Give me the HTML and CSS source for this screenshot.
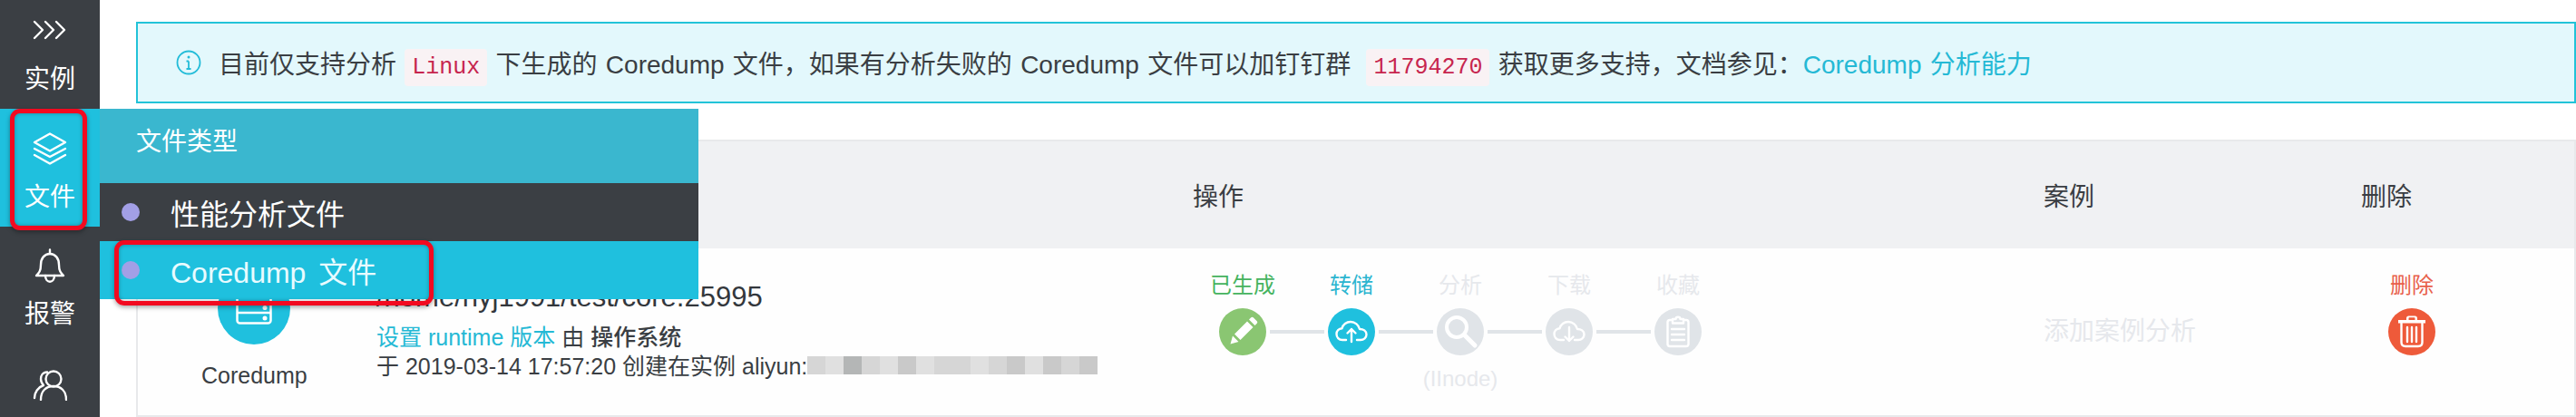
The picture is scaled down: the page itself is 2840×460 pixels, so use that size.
FILE: index.html
```html
<!DOCTYPE html>
<html lang="zh">
<head>
<meta charset="utf-8">
<title>Coredump 文件</title>
<link rel="stylesheet" href="styles.css">
</head>
<body>
<div class="app">
  <nav class="side">
    <a class="side-item first">
      <svg class="side-icon chev" viewBox="0 0 38 22"><path d="M2 2l9 9-9 9M14 2l9 9-9 9M26 2l9 9-9 9"/></svg>
      <span>实例</span>
    </a>
    <a class="side-item active">
      <svg class="side-icon stack" viewBox="0 0 38 36"><path d="M19 1.5L36 11 19 20.500 2 11z"/><path d="M2 18l17 9 17-9"/><path d="M2 25l17 9.500 17-9.500"/></svg>
      <span>文件</span>
    </a>
    <a class="side-item bell-item">
      <svg class="side-icon bell" viewBox="0 0 34 40"><path d="M2 31c3-3 5-5 5-12 0-7 4-12 10-12s10 5 10 12c0 7 2 9 5 12z"/><path d="M17 7V2.500M12 31c0 9 10 9 10 0"/></svg>
      <span>报警</span>
    </a>
    <a class="side-item users-item">
      <svg class="side-icon users" viewBox="0 0 38 34"><circle cx="23" cy="10" r="8.500"/><path d="M9 33c0-10 6-15 14-15s14 5 14 15"/><path d="M16 2.500c-5 0-7 4-7 7.500 0 3 1 5 3 7-6 2-10 8-10 14"/></svg>
    </a>
  </nav>

  <div class="flyout">
    <div class="fly-head">文件类型</div>
    <div class="fly-item"><i class="dot"></i><span>性能分析文件</span></div>
    <div class="fly-item current"><i class="dot"></i><span>Coredump 文件</span></div>
  </div>
  <div class="mark mark-side"></div>
  <div class="mark mark-item"></div>

  <main class="main">
    <div class="alert">
      <svg class="info" viewBox="0 0 28 28"><circle cx="14" cy="14" r="12.500"/><path d="M14 12.500v8.500M11.500 12.500H14M11.500 21h5"/><circle class="info-dot" cx="14" cy="8" r="1.500"/></svg>
      <span class="alert-text">目前仅支持分析 <code>Linux</code> 下生成的 Coredump 文件，如果有分析失败的 Coredump 文件可以加钉钉群 <code class="group-id">11794270</code> 获取更多支持，文档参见：<a class="link">Coredump 分析能力</a></span>
    </div>

    <section class="table">
      <div class="thead">
        <span></span>
        <span>操作</span>
        <span>案例</span>
        <span>删除</span>
      </div>
      <div class="trow">
        <div class="file">
          <div class="file-type">
            <div class="file-circle">
              <svg class="server" viewBox="0 0 40 36"><rect x="1.500" y="1.500" width="37" height="33" rx="3"/><path d="M1.500 12h37M1.500 23h37"/><circle class="fill" cx="32" cy="17.500" r="2.500"/><circle class="fill" cx="32" cy="29" r="2.500"/></svg>
            </div>
            <span class="file-label">Coredump</span>
          </div>
          <div class="file-info">
            <div class="file-path">/home/nyj1991/test/core.25995</div>
            <div class="file-meta"><a class="link">设置 runtime 版本</a> 由 <b>操作系统</b></div>
            <div class="file-meta created">于 2019-03-14 17:57:20 创建在实例 aliyun:<span class="mosaic"><i class="m1"></i><i class="m2"></i><i class="m3"></i><i class="m1"></i><i class="m2"></i><i class="m4"></i><i class="m2"></i><i class="m1"></i><i class="m1"></i><i class="m2"></i><i class="m1"></i><i class="m4"></i><i class="m2"></i><i class="m4"></i><i class="m1"></i><i class="m4"></i></span></div>
          </div>
        </div>

        <div class="steps">
          <div class="step-labels">
            <span class="green">已生成</span>
            <span class="blue">转储</span>
            <span>分析</span>
            <span>下载</span>
            <span>收藏</span>
          </div>
          <div class="step-icons">
            <div class="circle bg-green"><svg viewBox="0 0 52 52"><path class="solid" d="M12.500 39.500l2.500-9 6.500 6.500zM17 28.500L31 14.500l6.500 6.500L23.500 35zM33 12.500l2-2c1-1 2-1 3 0l3.500 3.500c1 1 1 2 0 3l-2 2z"/></svg></div>
            <i class="line"></i>
            <div class="circle bg-blue"><svg viewBox="0 0 52 52"><path class="stroke" d="M20 35h-4c-4 0-6.500-3-6.500-6.500 0-3.500 2.500-6 6-6.200C16.500 18 20.500 15 25 15c5 0 9 3.500 10 8 4 0 7.500 2 7.500 6 0 3.500-3 6-6.500 6h-4"/><path class="stroke" d="M26 37V23M21.500 27.500L26 23l4.500 4.500"/></svg></div>
            <i class="line"></i>
            <div class="circle"><svg viewBox="0 0 52 52"><circle class="stroke thick" cx="22" cy="21" r="11"/><path class="stroke wide" d="M31 30l11 11"/></svg></div>
            <i class="line"></i>
            <div class="circle"><svg viewBox="0 0 52 52"><path class="stroke" d="M20 35h-4c-4 0-6.500-3-6.500-6.500 0-3.500 2.500-6 6-6.200C16.500 18 20.500 15 25 15c5 0 9 3.500 10 8 4 0 7.500 2 7.500 6 0 3.500-3 6-6.500 6h-4"/><path class="stroke" d="M26 21v15M21.500 31.500L26 36l4.500-4.500"/></svg></div>
            <i class="line"></i>
            <div class="circle"><svg viewBox="0 0 52 52"><path class="stroke" d="M20 13h-3c-1.500 0-2.500 1-2.500 2.500v24c0 1.500 1 2.500 2.500 2.500h18c1.500 0 2.500-1 2.500-2.500v-24c0-1.500-1-2.500-2.500-2.500h-3"/><path class="stroke" d="M20 16.500h12V12h-3.500c0-3-5-3-5 0H20z"/><path class="stroke" d="M19 23h14M19 29h14M19 35h14"/></svg></div>
          </div>
          <div class="step-notes"><span></span><span></span><span>(IInode)</span><span></span><span></span></div>
        </div>

        <div class="case">添加案例分析</div>

        <div class="remove">
          <span class="remove-label">删除</span>
          <div class="circle bg-red"><svg viewBox="0 0 52 52"><path class="solid" d="M11 13h30v3.500H11zM20 13v-2c0-1.500 1-2.500 2.500-2.500h7c1.500 0 2.500 1 2.500 2.500v2h-2.500v-2c0-.5-.2-.7-.7-.7h-5.600c-.5 0-.7.2-.7.7v2z"/><path class="stroke" d="M14.500 16.500v21c0 3 1.500 4.500 4.500 4.500h14c3 0 4.500-1.500 4.500-4.500v-21"/><path class="stroke" d="M21 21v16M26 21v16M31 21v16"/></svg></div>
        </div>
      </div>
    </section>
  </main>
</div>
</body>
</html>
```

FILE: styles.css
```css
* { box-sizing: border-box; }
html, body { margin: 0; height: 460px; overflow: hidden; background: #fff; }
body {
  font-family: "Liberation Sans", "Noto Sans CJK SC", sans-serif;
  color: #3a3e43;
  font-size: 24px;
}
.app { display: flex; height: 460px; position: relative; }

/* sidebar */
.side {
  width: 110px;
  flex: none;
  background: #3b3f44;
  color: #fff;
  display: flex;
  flex-direction: column;
  font-size: 28px;
  overflow: hidden;
}
.side-item { display: flex; flex-direction: column; align-items: center; }
.side-item span { line-height: 32px; }
.side-item.first { height: 120px; padding-top: 22px; gap: 28px; }
.side-item.active { height: 130px; padding-top: 26px; gap: 20px; background: #1fc0de; }
.bell-item { height: 138px; padding-top: 23px; gap: 18px; }
.users-item { padding-top: 20px; }
.side-icon { fill: none; stroke: #fff; stroke-width: 2.4; stroke-linecap: round; stroke-linejoin: round; display: block; }
.chev { width: 38px; height: 22px; }
.stack { width: 38px; height: 36px; }
.bell { width: 34px; height: 40px; }
.users { width: 38px; height: 34px; }

/* flyout menu */
.flyout {
  position: absolute;
  left: 110px;
  top: 120px;
  width: 660px;
  z-index: 3;
  color: #fff;
}
.fly-head {
  height: 82px;
  background: #3ab7cf;
  padding: 18px 0 0 40px;
  font-size: 28px;
  line-height: 38px;
}
.fly-item {
  height: 64px;
  background: #3b3f44;
  display: flex;
  align-items: center;
  padding-left: 24px;
  font-size: 32px;
  gap: 34px;
  word-spacing: 5px;
}
.fly-item.current { background: #1fc0de; color: #e8fbff; }
.dot { width: 20px; height: 20px; border-radius: 50%; background: #a29fe6; flex: none; }

/* red annotations */
.mark {
  position: absolute;
  z-index: 4;
  border: 5px solid #f20a20;
  border-radius: 11px;
  box-shadow: 0 2px 5px rgba(0, 0, 0, .35), inset 0 0 4px rgba(0, 0, 0, .3);
}
.mark-side { left: 11px; top: 120px; width: 85px; height: 134px; }
.mark-item { left: 126px; top: 265px; width: 352px; height: 72px; }

/* main */
.main { flex: 1; min-width: 0; padding: 24px 0 0 40px; display: flex; flex-direction: column; gap: 40px; }
.alert {
  height: 90px;
  background: #e3f8fc;
  border: 2px solid #22c3d8;
  display: flex;
  align-items: center;
  padding-left: 42px;
  gap: 19px;
  font-size: 28px;
}
.info { width: 28px; height: 28px; flex: none; fill: none; stroke: #22bcd8; stroke-width: 1.8; }
.info-dot { fill: #22bcd8; stroke: none; }
.alert-text { white-space: nowrap; word-spacing: 1.500px; }
code {
  font-family: "Liberation Mono", monospace;
  font-size: 25px;
  color: #c7254e;
  background: #f9f2f4;
  padding: 6px 8px;
  border-radius: 4px;
  word-spacing: 0;
}
.group-id { margin-left: 8px; }
.link { color: #25b9d5; }

/* table */
.table { border: 2px solid #e8e9eb; height: 306px; display: flex; flex-direction: column; }
.thead {
  height: 118px;
  background: #f0f1f3;
  display: grid;
  grid-template-columns: 1163px 938px 350px 1fr;
  align-items: center;
  font-size: 28px;
}
.trow {
  flex: 1;
  display: grid;
  grid-template-columns: 1158px 943px 380px 1fr;
  background: #fefefe;
}
.file { display: flex; }
.file-type { width: 263px; padding: 26px 0 0 70px; display: flex; flex-direction: column; align-items: flex-start; }
.file-circle { width: 80px; height: 80px; border-radius: 50%; background: #1fc0de; margin-left: 18px; display: flex; align-items: center; justify-content: center; }
.server { width: 40px; height: 36px; fill: none; stroke: #fff; stroke-width: 2.5; }
.server .fill { fill: #fff; stroke: none; }
.file-label { margin-top: 20px; line-height: 28px; font-size: 25px; }
.file-info { padding-top: 36px; white-space: nowrap; font-size: 25px; }
.file-path { font-size: 31px; line-height: 36px; color: #33373c; }
.file-meta { line-height: 32px; }
.file-meta b { font-weight: 500; }
.file-info .file-path + .file-meta { margin-top: 10px; }
.created { display: flex; }
.mosaic { display: flex; height: 20px; margin-top: 5px; }
.mosaic i { width: 20px; height: 20px; }
.m1 { background: #d6d6d6; }
.m2 { background: #e0e0e0; }
.m3 { background: #b4b6b6; }
.m4 { background: #c9c9c9; }

/* steps */
.steps { padding-top: 27px; }
.step-labels, .step-notes { display: flex; color: #e6e8ec; line-height: 28px; }
.step-labels span, .step-notes span { width: 120px; text-align: center; white-space: nowrap; }
.step-labels .green { color: #45b35e; }
.step-labels .blue { color: #2bb5d0; }
.step-icons { display: flex; align-items: center; margin: 11px 0 12px 34px; }
.circle { width: 52px; height: 52px; border-radius: 50%; background: #e0e4e8; flex: none; }
.circle svg { display: block; width: 52px; height: 52px; }
.line { width: 60px; height: 4px; margin: 0 4px; background: #e0e4e8; flex: none; }
.bg-green { background: #8ac672; }
.bg-blue { background: #1fc0de; }
.bg-red { background: #ee5a3a; }
.solid { fill: #fff; }
.stroke { fill: none; stroke: #fff; stroke-width: 2.400; stroke-linecap: round; stroke-linejoin: round; }
.thick { stroke-width: 4; }
.wide { stroke-width: 5; }

.case { font-size: 28px; color: #e6e8ec; line-height: 32px; padding-top: 76px; white-space: nowrap; }
.remove { padding-top: 27px; display: flex; flex-direction: column; align-items: flex-start; }
.remove-label { color: #e8604a; line-height: 28px; margin-left: 2px; margin-bottom: 11px; }
```
